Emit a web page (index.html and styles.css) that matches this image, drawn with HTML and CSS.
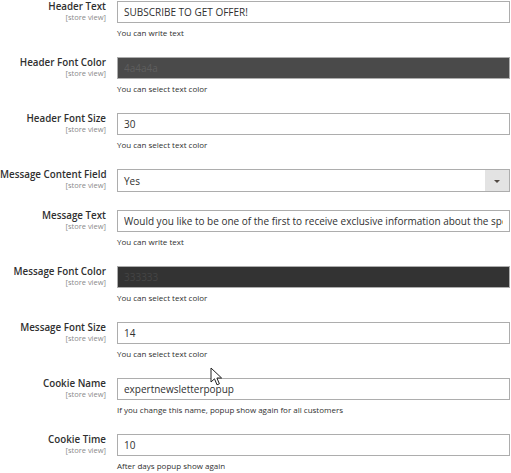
FILE: index.html
```html
<!DOCTYPE html>
<html lang="en">
<head>
    <meta charset="UTF-8">
    <meta name="viewport" content="width=device-width, initial-scale=1.0">
    <title>Newsletter Popup Settings</title>
    <link rel="stylesheet" href="styles.css">
</head>
<body>
    <div class="config">
        <div class="row">
            <div class="label">Header Text<span class="scope">[store view]</span></div>
            <div class="value">
                <input class="field" type="text" value="SUBSCRIBE TO GET OFFER!">
                <p class="note">You can write text</p>
            </div>
        </div>

        <div class="row">
            <div class="label">Header Font Color<span class="scope">[store view]</span></div>
            <div class="value">
                <input class="field color-dark" type="text" value="4a4a4a">
                <p class="note">You can select text color</p>
            </div>
        </div>

        <div class="row">
            <div class="label">Header Font Size<span class="scope">[store view]</span></div>
            <div class="value">
                <input class="field" type="text" value="30">
                <p class="note">You can select text color</p>
            </div>
        </div>

        <div class="row">
            <div class="label">Message Content Field<span class="scope">[store view]</span></div>
            <div class="value">
                <div class="select">
                    <span>Yes</span>
                    <span class="select-arrow"></span>
                </div>
            </div>
        </div>

        <div class="row">
            <div class="label">Message Text<span class="scope">[store view]</span></div>
            <div class="value">
                <input class="field" type="text" value="Would you like to be one of the first to receive exclusive information about the special offers and new products?">
                <p class="note">You can write text</p>
            </div>
        </div>

        <div class="row">
            <div class="label">Message Font Color<span class="scope">[store view]</span></div>
            <div class="value">
                <input class="field color-darker" type="text" value="333333">
                <p class="note">You can select text color</p>
            </div>
        </div>

        <div class="row">
            <div class="label">Message Font Size<span class="scope">[store view]</span></div>
            <div class="value">
                <input class="field" type="text" value="14">
                <p class="note">You can select text color</p>
            </div>
        </div>

        <div class="row">
            <div class="label">Cookie Name<span class="scope">[store view]</span></div>
            <div class="value">
                <input class="field" type="text" value="expertnewsletterpopup">
                <p class="note">If you change this name, popup show again for all customers</p>
            </div>
        </div>

        <div class="row">
            <div class="label">Cookie Time<span class="scope">[store view]</span></div>
            <div class="value">
                <input class="field" type="text" value="10">
                <p class="note">After days popup show again</p>
            </div>
        </div>
    </div>

    <!-- mouse pointer -->
    <svg class="pointer" width="14" height="20" viewBox="0 0 14 20">
        <path d="M1 1 L1 15 L4.5 11.8 L7 17.8 L9.4 16.8 L6.9 11 L11.6 11 Z" fill="#fff" stroke="#222" stroke-width="1" stroke-linejoin="round"/>
    </svg>
</body>
</html>
```

FILE: styles.css
```css
body {
    margin: 0;
    background: #fff;
    font-family: 'Open Sans', 'Noto Sans', sans-serif;
    color: #303030;
    position: relative;
}

.config {
    padding-top: 1px;
}

.row {
    display: grid;
    grid-template-columns: 106px 1fr;
    column-gap: 11px;
    margin-bottom: 17.3px;
    padding-right: 1px;
}

.label {
    text-align: right;
    font-size: 9.8px;
    line-height: 12px;
    font-weight: 600;
    color: #303030;
    white-space: nowrap;
}

.scope {
    display: block;
    font-size: 7.5px;
    line-height: 9px;
    font-weight: 400;
    color: #8a8a8a;
}

.value {
    min-width: 0;
}

.field {
    display: block;
    box-sizing: border-box;
    width: 100%;
    height: 22px;
    margin: 0;
    padding: 0 6px;
    border: 1px solid #adadad;
    border-radius: 0;
    background: #fff;
    font-family: inherit;
    font-size: 10px;
    color: #303030;
    outline: none;
}

.color-dark {
    background: #4a4a4a;
    color: #5e5e5e;
}

.color-darker {
    background: #333333;
    color: #454545;
}

.note {
    margin: 4px 0 0;
    font-size: 8px;
    line-height: 12.8px;
    color: #303030;
}

.select {
    display: flex;
    align-items: center;
    box-sizing: border-box;
    height: 23px;
    border: 1px solid #adadad;
    padding-left: 6px;
    font-size: 10px;
}

.select span:first-child {
    flex: 1;
}

.select-arrow {
    align-self: stretch;
    width: 24px;
    background: #e3e3e3;
    position: relative;
}

.select-arrow::after {
    content: '';
    position: absolute;
    left: 50%;
    top: 50%;
    margin: -1px 0 0 -3px;
    border-left: 3px solid transparent;
    border-right: 3px solid transparent;
    border-top: 3px solid #514943;
}

.pointer {
    position: absolute;
    left: 210px;
    top: 367px;
}
```
